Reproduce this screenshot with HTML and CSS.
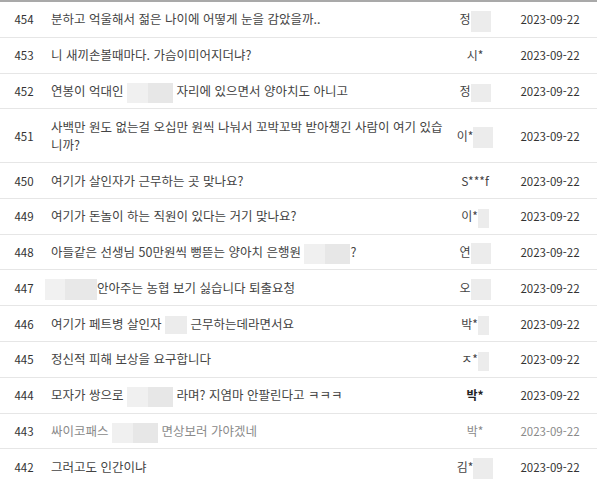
FILE: index.html
```html
<!DOCTYPE html>
<html lang="ko">
<head>
    <meta charset="UTF-8">
    <meta name="viewport" content="width=device-width, initial-scale=1.0">
    <title>게시판 목록</title>
    <link rel="stylesheet" href="styles.css">
</head>
<body>
    <div class="board">
        <div class="row">
            <div class="num">454</div>
            <div class="title">분하고 억울해서 젊은 나이에 어떻게 눈을 감았을까..</div>
            <div class="author">정<span class="blur b-name tall"></span></div>
            <div class="date">2023-09-22</div>
        </div>
        <div class="row">
            <div class="num">453</div>
            <div class="title">니 새끼손볼때마다. 가슴이미어지더냐?</div>
            <div class="author">시*</div>
            <div class="date">2023-09-22</div>
        </div>
        <div class="row">
            <div class="num">452</div>
            <div class="title">연봉이 억대인 <span class="blur b-wide"></span> 자리에 있으면서 양아치도 아니고</div>
            <div class="author">정<span class="blur b-name"></span></div>
            <div class="date">2023-09-22</div>
        </div>
        <div class="row">
            <div class="num">451</div>
            <div class="title">사백만 원도 없는걸 오십만 원씩 나눠서 꼬박꼬박 받아챙긴 사람이 여기 있습니까?</div>
            <div class="author">이*<span class="blur b-name tall"></span></div>
            <div class="date">2023-09-22</div>
        </div>
        <div class="row">
            <div class="num">450</div>
            <div class="title">여기가 살인자가 근무하는 곳 맞나요?</div>
            <div class="author">S***f</div>
            <div class="date">2023-09-22</div>
        </div>
        <div class="row">
            <div class="num">449</div>
            <div class="title">여기가 돈놀이 하는 직원이 있다는 거기 맞나요?</div>
            <div class="author">이*<span class="blur b-thin"></span></div>
            <div class="date">2023-09-22</div>
        </div>
        <div class="row">
            <div class="num">448</div>
            <div class="title">아들같은 선생님 50만원씩 뻥뜯는 양아치 은행원 <span class="blur b-wide"></span>?</div>
            <div class="author">연<span class="blur b-name tall"></span></div>
            <div class="date">2023-09-22</div>
        </div>
        <div class="row">
            <div class="num">447</div>
            <div class="title shift"><span class="blur b-lead"></span>안아주는 농협 보기 싫습니다 퇴출요청</div>
            <div class="author">오<span class="blur b-name tall"></span></div>
            <div class="date">2023-09-22</div>
        </div>
        <div class="row">
            <div class="num">446</div>
            <div class="title">여기가 페트병 살인자 <span class="blur b-small"></span> 근무하는데라면서요</div>
            <div class="author">박*<span class="blur b-thin"></span></div>
            <div class="date">2023-09-22</div>
        </div>
        <div class="row">
            <div class="num">445</div>
            <div class="title">정신적 피해 보상을 요구합니다</div>
            <div class="author">ㅈ*<span class="blur b-thin"></span></div>
            <div class="date">2023-09-22</div>
        </div>
        <div class="row">
            <div class="num">444</div>
            <div class="title">모자가 쌍으로 <span class="blur b-wide"></span> 라며? 지염마 안팔린다고 ㅋㅋㅋ</div>
            <div class="author strong">박*</div>
            <div class="date">2023-09-22</div>
        </div>
        <div class="row faded">
            <div class="num">443</div>
            <div class="title">싸이코패스 <span class="blur b-wide"></span> 면상보러 가야겠네</div>
            <div class="author">박*</div>
            <div class="date">2023-09-22</div>
        </div>
        <div class="row">
            <div class="num">442</div>
            <div class="title">그러고도 인간이냐</div>
            <div class="author">김*<span class="blur b-name tall"></span></div>
            <div class="date">2023-09-22</div>
        </div>
    </div>
</body>
</html>
```

FILE: styles.css
```css
body {
    margin: 0;
    padding: 0;
    background: #fff;
    font-family: "Noto Sans CJK KR", "Noto Sans", sans-serif;
    font-size: 12.5px;
    color: #444;
}
.board {
    border-top: 2px solid #a9a9a9;
}
.row {
    display: grid;
    grid-template-columns: 48px 392px 70px 80px;
    align-items: center;
    padding: 8.4px 0;
    line-height: 18px;
    border-bottom: 1px solid #e6e6e6;
}
.num {
    text-align: center;
    color: #333;
    font-size: 11.5px;
}
.title {
    padding-left: 3px;
    margin-right: -10px;
    word-break: break-all;
}
.title.shift {
    padding-left: 0;
    margin-left: -3px;
}
.author {
    text-align: center;
    white-space: nowrap;
    font-size: 12px;
}
.author.strong {
    font-weight: bold;
    color: #222;
}
.date {
    text-align: center;
    color: #333;
    font-size: 11.5px;
}
.faded .title,
.faded .author,
.faded .date {
    color: #8a8a8a;
}
.blur {
    display: inline-block;
    vertical-align: middle;
    margin: -4px 0;
    background: #ececec;
}
.b-name {
    width: 20px;
    height: 18px;
}
.b-name.tall {
    height: 21px;
}
.b-thin {
    width: 11px;
    height: 19px;
}
.b-wide {
    width: 46px;
    height: 20px;
    background: linear-gradient(90deg, #f0f0f0 45%, #e7e7e7 45%);
}
.b-lead {
    width: 52px;
    height: 21px;
    background: linear-gradient(90deg, #f1f1f1 38%, #e8e8e8 38%);
}
.b-small {
    width: 22px;
    height: 18px;
}
```
